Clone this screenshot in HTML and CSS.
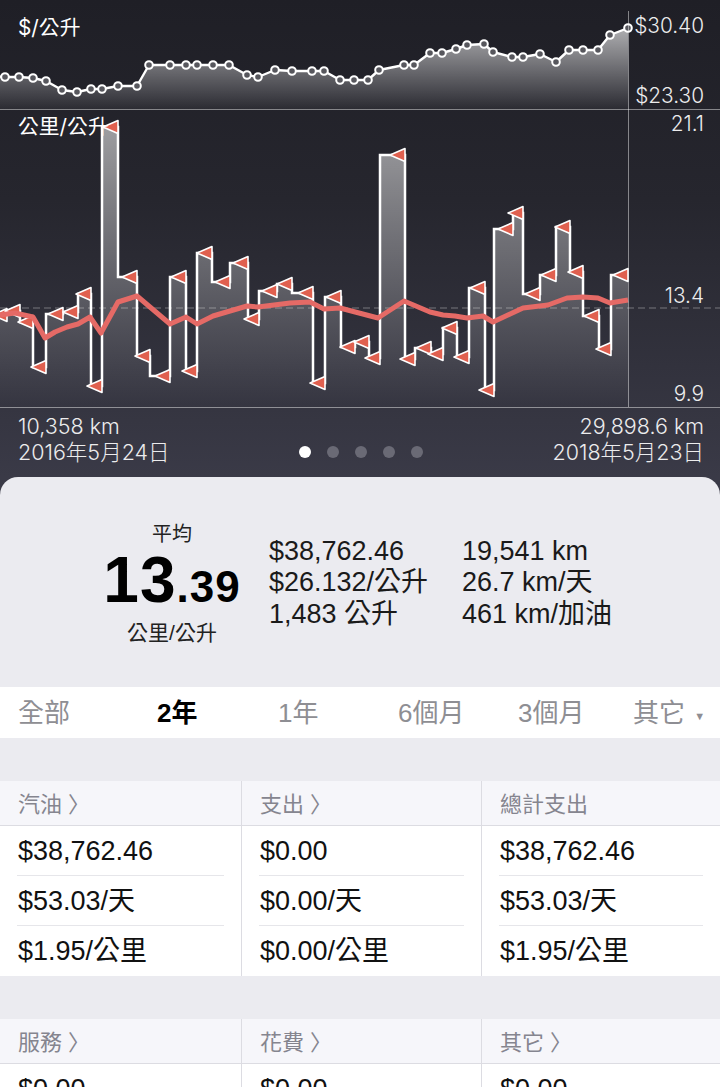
FILE: index.html
```html
<!DOCTYPE html>
<html lang="zh-Hant">
<head>
    <meta charset="UTF-8">
    <meta name="viewport" content="width=device-width, initial-scale=1.0">
    <title>油耗統計</title>
    <link rel="stylesheet" href="styles.css">
</head>
<body>
    <div class="chart-panel">
        <svg id="chart" class="chart" width="720" height="408" viewBox="0 0 720 408"></svg>
        <span class="chart-label title-price">$/公升</span>
        <span class="chart-label title-eff">公里/公升</span>
        <span class="chart-label axis price-max">$30.40</span>
        <span class="chart-label axis price-min">$23.30</span>
        <span class="chart-label axis eff-max">21.1</span>
        <span class="chart-label axis eff-avg">13.4</span>
        <span class="chart-label axis eff-min">9.9</span>

        <div class="chart-footer">
            <div class="range">
                <div>10,358 km</div>
                <div>2016年5月24日</div>
            </div>
            <div class="dots">
                <span class="dot active"></span>
                <span class="dot"></span>
                <span class="dot"></span>
                <span class="dot"></span>
                <span class="dot"></span>
            </div>
            <div class="range range-end">
                <div>29,898.6 km</div>
                <div>2018年5月23日</div>
            </div>
        </div>
    </div>

    <div class="sheet">
        <div class="summary">
            <div class="average">
                <div class="average-label">平均</div>
                <div class="average-value">13<small>.39</small></div>
                <div class="average-label unit">公里/公升</div>
            </div>
            <div class="stats">
                <div>$38,762.46</div>
                <div>$26.132/公升</div>
                <div>1,483 公升</div>
            </div>
            <div class="stats">
                <div>19,541 km</div>
                <div>26.7 km/天</div>
                <div>461 km/加油</div>
            </div>
        </div>

        <div class="tabs">
            <span>全部</span>
            <span class="selected">2年</span>
            <span>1年</span>
            <span>6個月</span>
            <span>3個月</span>
            <span>其它 <i class="caret">▼</i></span>
        </div>

        <div class="cost-table">
            <div class="cost-col">
                <div class="cost-head">汽油 〉</div>
                <div class="cost-row">$38,762.46</div>
                <div class="cost-row">$53.03/天</div>
                <div class="cost-row">$1.95/公里</div>
            </div>
            <div class="cost-col">
                <div class="cost-head">支出 〉</div>
                <div class="cost-row">$0.00</div>
                <div class="cost-row">$0.00/天</div>
                <div class="cost-row">$0.00/公里</div>
            </div>
            <div class="cost-col">
                <div class="cost-head">總計支出</div>
                <div class="cost-row">$38,762.46</div>
                <div class="cost-row">$53.03/天</div>
                <div class="cost-row">$1.95/公里</div>
            </div>
        </div>

        <div class="cost-table">
            <div class="cost-col">
                <div class="cost-head">服務 〉</div>
                <div class="cost-row">$0.00</div>
                <div class="cost-row">$0.00/天</div>
                <div class="cost-row">$0.00/公里</div>
            </div>
            <div class="cost-col">
                <div class="cost-head">花費 〉</div>
                <div class="cost-row">$0.00</div>
                <div class="cost-row">$0.00/天</div>
                <div class="cost-row">$0.00/公里</div>
            </div>
            <div class="cost-col">
                <div class="cost-head">其它 〉</div>
                <div class="cost-row">$0.00</div>
                <div class="cost-row">$0.00/天</div>
                <div class="cost-row">$0.00/公里</div>
            </div>
        </div>
    </div>

    <script src="chart.js"></script>
</body>
</html>
```

FILE: styles.css
```css
* {
    box-sizing: border-box;
}

html, body {
    margin: 0;
    padding: 0;
    height: 1087px;
    overflow: hidden;
}

body {
    font-family: "Liberation Sans", "Noto Sans CJK TC", sans-serif;
    background-color: #3a3a47;
    color: #111;
}

.chart-panel {
    position: relative;
    height: 477px;
    background: linear-gradient(#1f1f26 0, #26262e 200px, #3a3a47 477px);
    color: #ececed;
}

.chart {
    display: block;
}

.chart-label {
    position: absolute;
    font-family: "Inter", "Noto Sans CJK TC", sans-serif;
    font-weight: 300;
    font-size: 20.8px;
    line-height: 24px;
    white-space: nowrap;
}

.title-price { left: 18px; top: 16px; font-weight: 400; color: #fff; }
.title-eff { left: 18px; top: 115px; font-weight: 400; color: #fff; }
.axis { right: 16px; }
.price-max { top: 14px; }
.price-min { top: 84px; }
.eff-max { top: 112px; }
.eff-avg { top: 284px; }
.eff-min { top: 382px; }

.chart-footer {
    display: grid;
    grid-template-columns: 1fr auto 1fr;
    align-items: end;
    padding: 5px 16px 0 18px;
}

.range {
    font-family: "Inter", "Noto Sans CJK TC", sans-serif;
    font-weight: 300;
    font-size: 21.5px;
    line-height: 26px;
    white-space: nowrap;
}

.range-end {
    text-align: right;
}

.dots {
    display: flex;
    gap: 16px;
    padding-bottom: 7px;
}

.dot {
    width: 12px;
    height: 12px;
    border-radius: 50%;
    background-color: #6a6a75;
}

.dot.active {
    background-color: #fff;
}

.sheet {
    background-color: #ebebf0;
    border-radius: 18px 18px 0 0;
}

.summary {
    display: grid;
    grid-template-columns: 160px 176px 1fr;
    column-gap: 17px;
    align-items: center;
    height: 210px;
    padding-left: 92px;
}

.average {
    padding-top: 2px;
    text-align: center;
}

.average-label {
    font-size: 20px;
    line-height: 24px;
    color: #222;
}

.average-label.unit {
    font-size: 21px;
}

.average-value {
    font-size: 64px;
    font-weight: bold;
    line-height: 68px;
    letter-spacing: 1px;
    color: #000;
}

.average-value small {
    font-size: 44px;
}

.stats {
    padding-top: 2px;
    font-size: 27px;
    line-height: 31.5px;
    white-space: nowrap;
    color: #1a1a1a;
}

.tabs {
    display: grid;
    grid-template-columns: 139px 121px 120px 120px 115px 1fr;
    align-items: center;
    height: 51px;
    padding: 0 0 4px 18px;
    background-color: #fff;
    font-size: 26px;
    color: #8e8e93;
}

.tabs .selected {
    font-weight: bold;
    color: #000;
}

.caret {
    font-style: normal;
    font-size: 11px;
    vertical-align: 2px;
    margin-left: 2px;
}

.cost-table {
    display: grid;
    grid-template-columns: 242px 240px 1fr;
    margin-top: 43px;
    background-color: #fff;
}

.cost-col {
    border-right: 1px solid #dcdce2;
}

.cost-col:last-child {
    border-right: none;
}

.cost-head {
    height: 45px;
    padding-left: 18px;
    line-height: 47px;
    font-size: 22px;
    color: #85858f;
    background-color: #f6f6fa;
    border-bottom: 1px solid #dcdce2;
}

.cost-row {
    height: 50px;
    margin: 0 17px;
    padding-left: 1px;
    line-height: 50px;
    font-size: 27px;
    white-space: nowrap;
    color: #111;
    border-bottom: 1px solid #e6e6ea;
}

.cost-row:last-child {
    border-bottom: none;
}
```

FILE: chart.js
```js
const SVG_NS = 'http://www.w3.org/2000/svg';
const svg = document.getElementById('chart');

// price per litre, one point per fill-up
const pricePoints = [
    [-8, 76], [5, 77], [19, 77], [33, 78], [46, 81], [62, 90], [77, 92], [91, 89], [102, 89],
    [118, 86], [137, 86], [149, 65], [170, 65], [186, 65], [197, 65], [213, 65], [229, 65],
    [247, 75], [258, 77], [275, 70], [292, 71], [312, 71], [324, 71], [340, 80], [354, 80],
    [368, 80], [379, 70], [404, 65], [414, 65], [430, 53], [442, 53], [456, 49], [467, 45],
    [484, 44], [493, 52], [512, 57], [523, 57], [540, 54], [556, 62], [569, 50], [583, 50],
    [598, 50], [610, 35], [628, 28]
];

// km per litre: x where the step ends, y of the step
const steps = [
    [7, 315], [20, 311], [33, 322], [46, 367], [63, 314], [78, 312], [91, 294], [102, 386],
    [118, 127], [137, 277], [150, 356], [170, 376], [186, 277], [197, 371], [212, 253],
    [230, 282], [248, 263], [259, 319], [277, 291], [292, 284], [313, 293], [325, 383],
    [341, 297], [355, 347], [369, 342], [380, 358], [405, 155], [415, 359], [431, 348],
    [443, 354], [457, 328], [469, 357], [485, 288], [494, 390], [513, 229], [523, 213],
    [540, 294], [556, 275], [570, 227], [583, 272], [599, 316], [611, 349], [628, 275]
];

const averageLine = [
    [0, 315], [15, 313], [33, 317], [45, 338], [55, 332], [67, 327], [78, 324], [90, 317],
    [101, 333], [118, 302], [137, 296], [170, 324], [186, 317], [197, 324], [213, 316],
    [247, 306], [258, 307], [290, 303], [310, 302], [324, 309], [340, 308], [378, 318],
    [404, 301], [430, 312], [443, 315], [455, 316], [467, 318], [483, 316], [493, 322],
    [523, 308], [548, 305], [567, 298], [583, 297], [598, 298], [610, 303], [628, 300]
];

function add(name, attrs, parent) {
    const el = document.createElementNS(SVG_NS, name);
    for (const key in attrs) {
        el.setAttribute(key, attrs[key]);
    }
    (parent || svg).appendChild(el);
    return el;
}

function addGradient(id, y1, y2, from, to) {
    const defs = svg.querySelector('defs') || add('defs', {});
    const grad = add('linearGradient', {
        id: id, gradientUnits: 'userSpaceOnUse', x1: 0, x2: 0, y1: y1, y2: y2
    }, defs);
    add('stop', { offset: 0, 'stop-color': '#fff', 'stop-opacity': from }, grad);
    add('stop', { offset: 1, 'stop-color': '#fff', 'stop-opacity': to }, grad);
}

function toPath(points) {
    return points.map((p, i) => (i ? 'L' : 'M') + p[0] + ' ' + p[1]).join(' ');
}

function drawPriceChart() {
    addGradient('priceFill', 28, 109, 0.64, 0.04);
    add('path', { d: toPath(pricePoints) + ' L628 109 L-8 109 Z', fill: 'url(#priceFill)' });
    add('path', {
        d: toPath(pricePoints), fill: 'none', stroke: '#fff', 'stroke-width': 2.4, 'stroke-linejoin': 'round'
    });
    pricePoints.forEach(p => {
        add('circle', { cx: p[0], cy: p[1], r: 3.8, fill: '#57575d', stroke: '#fff', 'stroke-width': 2 });
    });
}

function drawEfficiencyChart() {
    const line = [];
    let x = -6;
    steps.forEach(s => {
        line.push([x, s[1]], [s[0], s[1]]);
        x = s[0];
    });

    addGradient('effFill', 125, 407, 0.56, 0);
    add('path', { d: toPath(line) + ' L628 407 L-6 407 Z', fill: 'url(#effFill)' });
    add('line', {
        x1: 0, x2: 720, y1: 308, y2: 308, stroke: '#fff', 'stroke-opacity': 0.35, 'stroke-dasharray': '7 4'
    });
    add('path', { d: toPath(line), fill: 'none', stroke: '#fff', 'stroke-width': 2.5 });

    // little flag at the end of every step
    steps.forEach(s => {
        const points = [[s[0] - 15, s[1]], [s[0], s[1] - 6.5], [s[0], s[1] + 6.5]].join(' ');
        add('polygon', {
            points: points, fill: '#e0604f', stroke: '#fff', 'stroke-width': 1.6, 'stroke-linejoin': 'round'
        });
    });

    add('path', {
        d: toPath(averageLine), fill: 'none', stroke: '#e56a66', 'stroke-width': 5, 'stroke-linejoin': 'round'
    });
}

function drawFrame() {
    const frame = { stroke: '#fff', 'stroke-opacity': 0.45, 'stroke-width': 1 };
    add('line', Object.assign({ x1: 0, x2: 720, y1: 109.5, y2: 109.5 }, frame));
    add('line', Object.assign({ x1: 0, x2: 720, y1: 407.5, y2: 407.5 }, frame));
    add('line', Object.assign({ x1: 628.5, x2: 628.5, y1: 11, y2: 407 }, frame));
}

drawPriceChart();
drawEfficiencyChart();
drawFrame();
```
